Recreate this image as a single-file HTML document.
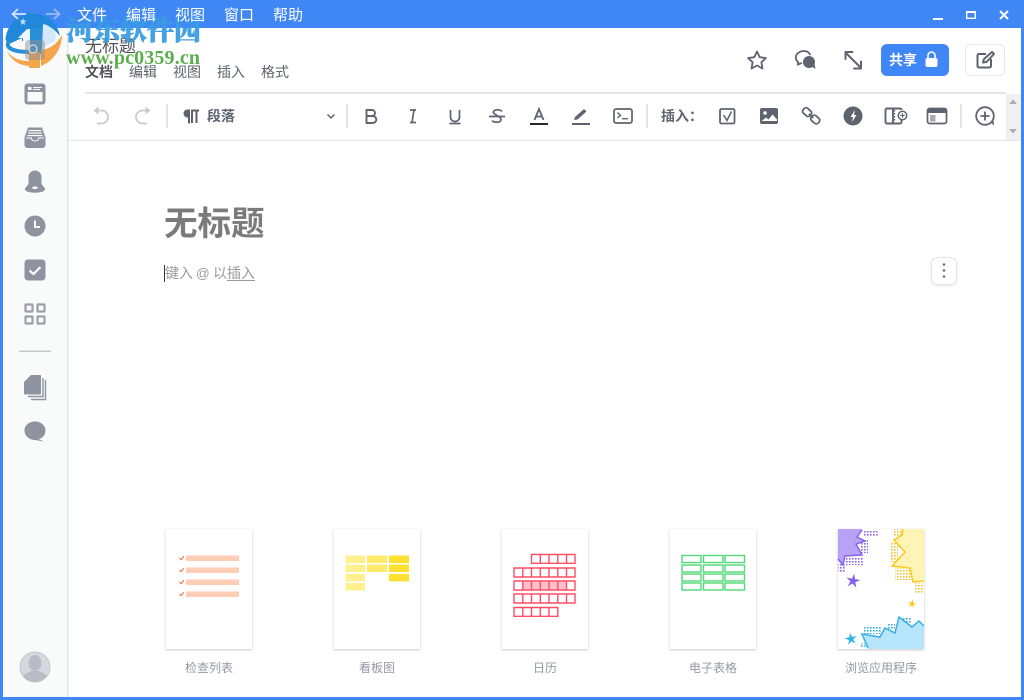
<!DOCTYPE html>
<html><head><meta charset="utf-8"><title>无标题</title>
<style>
html,body{margin:0;padding:0;background:#fff;width:1024px;height:700px;overflow:hidden}
svg{display:block;position:absolute;left:0;top:0}
text{font-family:"Liberation Sans","Noto Sans CJK SC",sans-serif}
</style></head><body>
<svg width="1024" height="700" viewBox="0 0 1024 700" xmlns="http://www.w3.org/2000/svg">
<defs>
<pattern id="dotP" width="3" height="3" patternUnits="userSpaceOnUse"><rect width="1.6" height="1.6" fill="#8a63e8"/></pattern>
<pattern id="dotY" width="3" height="3" patternUnits="userSpaceOnUse"><rect width="1.6" height="1.6" fill="#f2c230"/></pattern>
<pattern id="dotB" width="3" height="3" patternUnits="userSpaceOnUse"><rect width="1.6" height="1.6" fill="#35aee0"/></pattern>
<filter id="sh" x="-10%" y="-10%" width="120%" height="120%"><feDropShadow dx="0" dy="1" stdDeviation="1.2" flood-color="#000" flood-opacity=".22"/></filter>
<filter id="sh2" x="-20%" y="-20%" width="140%" height="140%"><feDropShadow dx="0" dy="1" stdDeviation="1" flood-color="#000" flood-opacity=".1"/></filter>
</defs>

<!-- frame -->
<rect width="1024" height="700" fill="#3f87f5"/>
<rect x="3" y="28" width="1018" height="669" fill="#fff"/>
<rect x="3" y="28" width="64" height="669" fill="#f9fafa"/>
<rect x="67" y="28" width="1.5" height="669" fill="#e3e5e8"/>

<!-- window controls -->
<rect x="933" y="18" width="10" height="2" fill="#fff"/>
<rect x="966.700" y="11.700" width="8.600" height="6.600" fill="none" stroke="#fff" stroke-width="1.400"/>
<rect x="966" y="11" width="10" height="2" fill="#fff"/>
<path d="M1000 11l8 8M1008 11l-8 8" stroke="#fff" stroke-width="2"/>

<!-- heading area -->
<text x="85" y="52" font-size="17" fill="#4e5157">无标题</text>
<g font-size="14" fill="#5f636b">
<text x="85" y="77" font-weight="700" fill="#50545b">文档</text>
<text x="129" y="77">编辑</text><text x="173" y="77">视图</text><text x="217" y="77">插入</text><text x="261" y="77">格式</text>
</g>

<!-- top right actions -->
<g fill="none" stroke="#5d6470" stroke-width="1.800" stroke-linejoin="round" stroke-linecap="round">
<path d="M757 51.500l2.700 5.700 6.200.8-4.500 4.300 1.100 6.200-5.500-3-5.500 3 1.100-6.200-4.500-4.300 6.200-.8z"/>
<path d="M810 54.500c-1-2-3.200-3.500-5.700-3.500-5 0-8.500 3-8.500 6.500 0 2 1 3.600 2.500 4.700l-.5 2.500 3.500-1.500"/>
<path d="M846 53l14 14M845.500 59v-7h7M861 61.500v7h-7" stroke-width="2"/>
</g>
<circle cx="809" cy="62" r="6" fill="#5d6470"/><path d="M811 66l4.500 3-1-5.500z" fill="#5d6470"/>
<rect x="881" y="44" width="68" height="32" rx="6" fill="#3f87f5"/>
<text x="889" y="65" font-size="14" font-weight="700" fill="#fff">共享</text>
<rect x="925.500" y="58" width="12" height="9" rx="2" fill="#fff"/>
<path d="M928 58v-2.500a3.500 3.500 0 0 1 7 0V58" fill="none" stroke="#fff" stroke-width="1.600"/>
<rect x="965.500" y="44.500" width="39" height="31" rx="5" fill="#fff" stroke="#e7e8eb"/>
<g fill="none" stroke="#5d6470" stroke-width="2" stroke-linejoin="round">
<path d="M986 54h-7a1.500 1.500 0 0 0-1.500 1.500v10.500a1.500 1.500 0 0 0 1.500 1.500h10.500a1.500 1.500 0 0 0 1.500-1.500V59"/>
<path d="M983 62.500l1-3.500 8-7 2 2-7.500 8z"/>
</g>

<!-- toolbar -->
<rect x="85" y="92" width="921" height="2" fill="#e5e6ea"/>
<rect x="68" y="140" width="953" height="1" fill="#e5e6ea"/>
<rect x="1006" y="94" width="15" height="46" fill="#f0f0f0"/>
<path d="M1009 104l4-4.500 4 4.500z" fill="#aeaeae"/><path d="M1009 129l4 4.500 4-4.500z" fill="#aeaeae"/>
<g fill="none" stroke="#c9cbce" stroke-width="1.800">
<path d="M96 110.500h5.500a6.500 6.500 0 0 1 0 13H97"/><path d="M148 110.500h-5.500a6.500 6.500 0 0 0 0 13h4.500"/>
</g>
<path d="M93.500 110.500l5-4v8z" fill="#c9cbce"/><path d="M150.500 110.500l-5-4v8z" fill="#c9cbce"/>
<g fill="#e1e3e6"><rect x="166" y="104" width="2" height="24"/><rect x="346" y="104" width="2" height="24"/><rect x="646" y="104" width="2" height="24"/><rect x="960" y="104" width="2" height="24"/></g>
<path d="M190 109.500h-2.500a4 4 0 0 0 0 8h.5v6h2zM191 109.500h8v2h-1.500v11.500h-2v-11.500H193v11.500h-2z" fill="#5d6470"/>
<text x="207" y="121" font-size="14" font-weight="700" fill="#5d6470">段落</text>
<path d="M327.500 114.500l3.500 3.500 3.500-3.500" fill="none" stroke="#5d6470" stroke-width="1.500"/>

<g fill="none" stroke="#5d6470" stroke-width="1.900">
<path d="M366.500 110h5.500a3 3 0 0 1 0 6h-5.500zM366.500 116h6.300a3.500 3.500 0 0 1 0 7h-6.300z"/>
<path d="M410 110h6M410 122.500h6M414 110l-2 12.500" stroke-width="1.700"/>
<path d="M450.500 110v7a4.500 4.500 0 0 0 9 0v-7M449.500 123.500h11" stroke-width="1.700"/>
<path d="M489 116.500h16M502 111.500c-1.500-2-7-2.500-8.500 0-1.500 3 7.500 4.500 7.500 8 0 3.500-7 3.500-9 1" stroke-width="1.700"/>
</g>
<path d="M534.500 120l4.500-11 4.500 11M536 116.500h6" fill="none" stroke="#5d6470" stroke-width="1.800"/>
<rect x="530" y="123" width="18" height="2" fill="#26292e"/>
<path d="M574 120l1 -3 9-8 2.500 2.500-9 8z" fill="#5d6470"/>
<rect x="572" y="123" width="18" height="2" fill="#5d6470"/>
<rect x="614" y="109" width="18" height="14" rx="2" fill="none" stroke="#5d6470" stroke-width="1.700"/>
<path d="M617.500 112.500l3 3-3 2.500" fill="none" stroke="#5d6470" stroke-width="1.400"/>
<rect x="622" y="118" width="6" height="1.400" fill="#5d6470"/>

<text x="661" y="121" font-size="14" font-weight="700" fill="#5d6470">插入</text>
<text x="689" y="121" font-size="14" font-weight="700" fill="#5d6470">：</text>
<rect x="720" y="109" width="14.500" height="14.500" rx="1.500" fill="none" stroke="#5d6470" stroke-width="1.800"/>
<path d="M723.500 115l3.500 5.500 4.500-9" fill="none" stroke="#5d6470" stroke-width="1.500"/>
<rect x="760" y="108" width="18" height="16" rx="2" fill="#5d6470"/>
<circle cx="765" cy="113" r="1.800" fill="#fff"/>
<path d="M761 121.500l5-4 2.500 2 4-5 4.500 5v1.500h-16z" fill="#fff"/>
<g fill="none" stroke="#5d6470" stroke-width="1.800" transform="rotate(42 811 116)">
<rect x="801" y="112.500" width="9" height="6.500" rx="2.500"/><rect x="812" y="112.500" width="9" height="6.500" rx="2.500"/><path d="M808 115.800h6"/>
</g>
<circle cx="853" cy="116" r="9.500" fill="#5d6470"/>
<path d="M855 110l-4.500 7h2.500l-1 5 4.500-7h-2.500z" fill="#fff"/>
<path d="M893 108.500h-6a1.500 1.500 0 0 0-1.500 1.500v12a1.500 1.500 0 0 0 1.500 1.500h13a1.500 1.500 0 0 0 1.500-1.500V120M901.500 110a1.500 1.500 0 0 0-1.500-1.500h-7v15" fill="none" stroke="#5d6470" stroke-width="1.900"/>
<path d="M894.500 110v12" stroke="#5d6470" stroke-width="1.500" stroke-dasharray="1.500 1.500"/>
<circle cx="902.500" cy="115.500" r="4.200" fill="#fff" stroke="#5d6470" stroke-width="1.500"/>
<path d="M900.300 115.500h4.400M902.500 113.300v4.400" stroke="#5d6470" stroke-width="1.200"/>
<rect x="927.500" y="108.500" width="19" height="15" rx="2" fill="#fff" stroke="#5d6470" stroke-width="1.700"/>
<rect x="927.500" y="108.500" width="19" height="4.500" rx="1.500" fill="#5d6470"/>
<rect x="930" y="115" width="5.500" height="6.500" fill="#a9adb3"/>
<circle cx="985" cy="116" r="8.800" fill="none" stroke="#5d6470" stroke-width="1.800"/>
<path d="M980.500 116h9M985 111.500v9" stroke="#5d6470" stroke-width="1.800"/>
<path d="M990 122l4 3.500-.5-5z" fill="#5d6470"/>

<!-- sidebar icons -->
<g fill="#8d939f">
<rect x="24.500" y="83.500" width="21" height="21" rx="3"/>
<rect x="27.500" y="92" width="15" height="9.500" fill="#fbfbfc"/>
<rect x="28" y="87" width="3.500" height="3" fill="#fbfbfc"/><rect x="33" y="87" width="9" height="1" fill="#fbfbfc"/><rect x="33" y="89" width="7" height="1" fill="#fbfbfc"/>

<path d="M28 127.500h14l3.500 10v7.500a3 3 0 0 1-3 3h-15a3 3 0 0 1-3-3v-7.500z"/>
<rect x="28.500" y="130" width="13" height="1.200" fill="#fbfbfc"/><rect x="28" y="132.500" width="14" height="1.200" fill="#fbfbfc"/><rect x="27.500" y="135" width="15" height="1.200" fill="#fbfbfc"/>
<path d="M26 138h5.500c0 2 1.500 3 3.500 3s3.500-1 3.500-3H44" fill="none" stroke="#fbfbfc" stroke-width="1"/>

<path d="M35 170.500a6.500 6.500 0 0 1 6.500 6.500v7l3.500 4.500a1 1 0 0 1-.5 1.500h-19a1 1 0 0 1-.5-1.500l3.500-4.500v-7a6.500 6.500 0 0 1 6.500-6.500z"/>
<ellipse cx="35" cy="190" rx="9.500" ry="2.700" fill="#8d939f"/>
<ellipse cx="35" cy="187.800" rx="2.800" ry="1.400" fill="#fbfbfc"/>

<circle cx="35" cy="226" r="10.500"/>
<path d="M35 220.500v6.500h5" fill="none" stroke="#fbfbfc" stroke-width="2"/>

<rect x="24.500" y="259.500" width="21" height="21" rx="3.500"/>
<path d="M29.500 270.500l4 3.500 7-7" fill="none" stroke="#fbfbfc" stroke-width="2.200"/>
</g>
<g fill="none" stroke="#9ba0ab" stroke-width="2.200">
<rect x="25.500" y="304.500" width="7" height="7" rx=".5"/><rect x="37.500" y="304.500" width="7" height="7" rx=".5"/>
<rect x="25.500" y="316.500" width="7" height="7" rx=".5"/><rect x="37.500" y="316.500" width="7" height="7" rx=".5"/>
</g>
<rect x="19" y="350.500" width="32" height="1.500" fill="#c6c8ca"/>
<g fill="#8d939f">
<path d="M45.500 380v19.500H31" fill="none" stroke="#8d939f" stroke-width="1.400"/>
<path d="M43 378v18.500H28" fill="none" stroke="#8d939f" stroke-width="1.400"/>
<path d="M31 375h9a1 1 0 0 1 1 1v17.500a1 1 0 0 1-1 1H25a1 1 0 0 1-1-1V382z"/>
<path d="M35 421.500c6 0 10.500 4 10.500 9s-3.500 8-7 8.500l5.500 2.500-9-1.500c-6 0-10.500-4.500-10.500-9.500s4.500-9 10.500-9z"/>
</g>
<circle cx="35" cy="667" r="15" fill="#d5d8de" stroke="#c4c7ce"/>
<ellipse cx="35" cy="663" rx="6.500" ry="8" fill="#b9bcc4"/>
<path d="M23 676c3-3.500 7-4 8-5h8c1 1 5 1.500 8 5a15 15 0 0 1-24 0z" fill="#b9bcc4"/>

<!-- doc body -->
<text x="164" y="235" font-size="33.500" font-weight="700" fill="#7b7b7b">无标题</text>
<rect x="164" y="265" width="1" height="17" fill="#333"/>
<g font-size="14" fill="#9a9a9a">
<text x="165" y="278">键入</text><text x="196" y="278" font-size="13.500">@</text><text x="213" y="278">以插入</text>
</g>
<rect x="227" y="280" width="28" height="1" fill="#9a9a9a"/>
<rect x="931.500" y="257.500" width="25" height="27" rx="6" fill="#fff" stroke="#e4e5e8" filter="url(#sh2)"/>
<g fill="#6a707b"><circle cx="944" cy="264.500" r="1.300"/><circle cx="944" cy="270.500" r="1.300"/><circle cx="944" cy="276.500" r="1.300"/></g>

<!-- cards -->
<g fill="#fff" filter="url(#sh)">
<rect x="166" y="529" width="86" height="120"/><rect x="334" y="529" width="86" height="120"/><rect x="502" y="529" width="86" height="120"/><rect x="670" y="529" width="86" height="120"/><rect x="838" y="529" width="86" height="120"/>
</g>
<g fill="#ffcdb6">
<rect x="186" y="555.500" width="53" height="5.500"/><rect x="186" y="567.500" width="53" height="5.500"/><rect x="186" y="579.500" width="53" height="5.500"/><rect x="186" y="591.500" width="53" height="5.500"/>
</g>
<g fill="none" stroke="#f5824a" stroke-width="1.300">
<path d="M179.500 558l1.800 1.700 2.500-3.500"/><path d="M179.500 570l1.800 1.700 2.500-3.500"/><path d="M179.500 582l1.800 1.700 2.500-3.500"/><path d="M179.500 594l1.800 1.700 2.500-3.500"/>
</g>
<g fill="#fff08d">
<rect x="345.500" y="555.500" width="19.500" height="7.500"/><rect x="345.500" y="564.500" width="19.500" height="7.500"/><rect x="345.500" y="573.800" width="19.500" height="7.500"/><rect x="345.500" y="583" width="19.500" height="7.500"/>
</g>
<g fill="#ffe968"><rect x="367" y="555.500" width="20" height="7.500"/><rect x="367" y="564.500" width="20" height="7.500"/></g>
<g fill="#ffe02e"><rect x="389" y="555.500" width="20" height="7.500"/><rect x="389" y="564.500" width="20" height="7.500"/><rect x="389" y="573.800" width="20" height="7.500"/></g>

<!-- calendar -->
<rect x="522.500" y="581" width="44" height="9.500" fill="#ffc0c9"/>
<g fill="none" stroke="#ff4d66" stroke-width="1.400">
<path d="M531.500 554.500h43.500v8.800h-43.500zM540.300 554.500v8.800M549 554.500v8.800M557.800 554.500v8.800M566.500 554.500v8.800"/>
<path d="M514 568h61v9h-61zM522.800 568v9M531.500 568v9M540.300 568v9M549 568v9M557.800 568v9M566.500 568v9"/>
<path d="M514 581h61v9h-61zM522.800 581v9M531.500 581v9M540.300 581v9M549 581v9M557.800 581v9M566.500 581v9"/>
<path d="M514 594h61v9h-61zM522.800 594v9M531.500 594v9M540.300 594v9M549 594v9M557.800 594v9M566.500 594v9"/>
<path d="M514 607.500h43.800v8.800H514zM522.800 607.500v8.800M531.500 607.500v8.800M540.300 607.500v8.800M549 607.500v8.800"/>
</g>

<!-- spreadsheet -->
<g fill="none" stroke="#52d878" stroke-width="1.400">
<rect x="682" y="555.500" width="19" height="7"/><rect x="703.500" y="555.500" width="19.500" height="7"/><rect x="725" y="555.500" width="19.500" height="7"/>
<rect x="682" y="565" width="19" height="7"/><rect x="703.500" y="565" width="19.500" height="7"/><rect x="725" y="565" width="19.500" height="7"/>
<rect x="682" y="574" width="19" height="7"/><rect x="703.500" y="574" width="19.500" height="7"/><rect x="725" y="574" width="19.500" height="7"/>
<rect x="682" y="583" width="19" height="7"/><rect x="703.500" y="583" width="19.500" height="7"/><rect x="725" y="583" width="19.500" height="7"/>
</g>

<!-- app card art -->
<rect x="863" y="530" width="15" height="7" fill="url(#dotP)"/>
<rect x="860" y="540" width="8" height="13" fill="url(#dotP)"/>
<rect x="845" y="557" width="18" height="8" fill="url(#dotP)"/>
<rect x="838" y="563" width="7" height="9" fill="url(#dotP)"/>
<path d="M838 529H862.500L857 537l8 4-9 3 6 11-17 1-2 9-5-6z" fill="#b7a2f5"/>
<path d="M862 530l-5 7 8 4-9 3 6 11-17 1-2 9-5-6" fill="none" stroke="#8560ec" stroke-width="1.500"/>

<rect x="893" y="529" width="10" height="8" fill="url(#dotY)"/>
<rect x="890" y="543" width="8" height="19" fill="url(#dotY)"/>
<rect x="895" y="568" width="18" height="12" fill="url(#dotY)"/>
<rect x="915" y="583" width="8" height="10" fill="url(#dotY)"/>
<path d="M903 529l-1 6-8 5 11 12-13 14 18 2 3 14 11-1V529z" fill="#fff3b5"/>
<path d="M903 529l-1 6-8 5 11 12-13 14 18 2 3 14 11-1" fill="none" stroke="#ffc81a" stroke-width="1.500"/>

<rect x="863" y="627" width="19" height="7" fill="url(#dotB)"/>
<rect x="888" y="623" width="7" height="7" fill="url(#dotB)"/>
<rect x="903" y="617" width="9" height="6" fill="url(#dotB)"/>
<rect x="860" y="643" width="7" height="5" fill="url(#dotB)"/>
<path d="M868 649l-6-15 18 3 5-9 10 5 4-16 13 10 7-6 5 5v23z" fill="#b7e5fb"/>
<path d="M868 648l-6-14 18 3 5-9 10 5 4-16 13 10 7-6 5 5" fill="none" stroke="#32b1e6" stroke-width="1.500"/>

<path transform="translate(853 581) rotate(10) scale(.75)" d="M0-10L2.100-2.900 9.500-3.100 3.300 1.100 5.900 8.100 0 3.500-5.900 8.100-3.300 1.100-9.500-3.100-2.100-2.900z" fill="#8560ec"/>
<path transform="translate(912 604) rotate(10) scale(.45)" d="M0-10L2.100-2.900 9.500-3.100 3.300 1.100 5.900 8.100 0 3.500-5.900 8.100-3.300 1.100-9.500-3.100-2.100-2.900z" fill="#ffc81a"/>
<path transform="translate(851 639) rotate(-10) scale(.65)" d="M0-10L2.100-2.900 9.500-3.100 3.300 1.100 5.900 8.100 0 3.500-5.900 8.100-3.300 1.100-9.500-3.100-2.100-2.900z" fill="#2cb4e8"/>

<g font-size="12" fill="#9398a3" text-anchor="middle">
<text x="209" y="672">检查列表</text><text x="377" y="672">看板图</text><text x="545" y="672">日历</text><text x="713" y="672">电子表格</text><text x="881" y="672">浏览应用程序</text>
</g>

<!-- watermark -->
<path d="M5.500 40A27.500 27.500 0 0 1 60 36C55 30 50 26 44 25L42 50H30V41H22V38L9 44z" fill="#1f88d8"/>
<path d="M18 38l9-9h3v15h-7v-6z" fill="#fff" opacity=".92"/>
<path d="M43 24c6 1 11 5 13 11l-1 6-13 7z" fill="#d4e7fb"/>
<path d="M9 41c-4 6 2 11 21 11h12" fill="none" stroke="#2a8fd9" stroke-width="4"/>
<path d="M30 28h12v24H30z" fill="#2a8fd9"/>
<path d="M7 51c5 7 12 10 22 10v5C18 65 11 60 7 51z" fill="#f5a54c"/>
<path d="M29 52h11v16H29z" fill="#f5a54c"/>
<path d="M41 50c9-1 16-6 21-15 0 13-8 26-21 31z" fill="#f5a54c"/>
<path d="M23 18l1 2.500 2.500.2-2 1.600.7 2.700-2.200-1.500-2.200 1.500.7-2.700-2-1.600 2.500-.2z" fill="#bfe0fa"/>
<rect x="25" y="40" width="20" height="20" rx="4" fill="#8f8f8f" opacity=".5"/>
<circle cx="33" cy="49" r="4" fill="none" stroke="#ddd" stroke-width="1.500" opacity=".8"/>
<text x="66" y="40" font-size="27" font-weight="900" fill="#3a9ce3" stroke="#3a9ce3" stroke-width=".6" opacity=".95" style="font-family:'Noto Serif CJK SC','Noto Sans CJK SC',serif">河东软件园</text>
<text x="66" y="64" font-size="20" font-weight="700" fill="#5cae4c" textLength="134" lengthAdjust="spacing" style="font-family:'Liberation Serif',serif">www.pc0359.cn</text>

<!-- title bar on top -->
<g fill="none" stroke="#d6e5fc" stroke-width="1.700">
<path d="M26 14H13M18 9l-5.500 5 5.500 5"/>
<path d="M46 14H59M54 9l5.500 5-5.500 5" stroke="#9dbef2"/>
</g>
<g fill="#fff" font-size="15">
<text x="77" y="20">文件</text><text x="126" y="20">编辑</text><text x="175" y="20">视图</text><text x="224" y="20">窗口</text><text x="273" y="20">帮助</text>
</g>
</svg>
</body></html>
